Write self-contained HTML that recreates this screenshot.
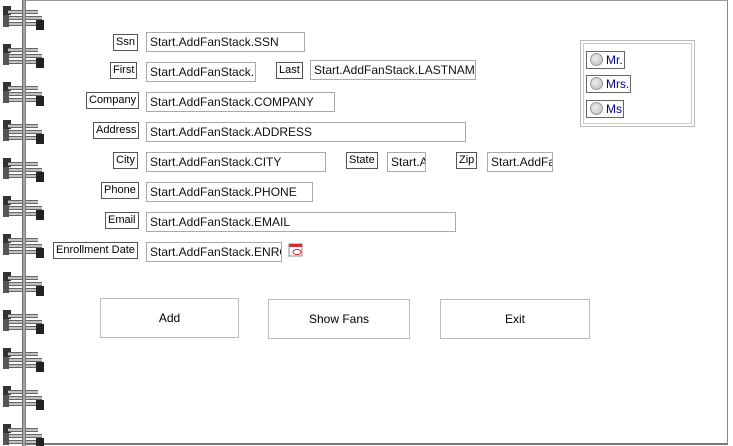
<!DOCTYPE html>
<html><head><style>
body{margin:0;width:733px;height:446px;background:#fff;position:relative;overflow:hidden;font-family:"Liberation Sans",sans-serif;}
.page{position:absolute;left:22px;top:0;width:705px;height:442px;border-top:1px solid #999;border-right:1px solid #888;border-bottom:2px solid #777;}
.bar{position:absolute;left:22px;top:0;width:4px;height:446px;background:linear-gradient(90deg,#555,#bbb,#666);}
.lb{position:absolute;border:1px solid #555;background:#fff;font-size:11px;color:#000;padding:0 2px;height:15px;line-height:15px;}
.in{position:absolute;box-sizing:border-box;border:1px solid #aaa;background:#fff;font-size:12px;height:20px;line-height:18px;padding-left:3px;overflow:hidden;white-space:nowrap;color:#111;}
.btn{position:absolute;box-sizing:border-box;border:1px solid #bbb;background:#fff;font-size:12px;text-align:center;}
.rd{position:absolute;left:586px;border:1px solid #666;height:16px;font-size:12px;line-height:16px;padding-right:1px;color:#00008b;}
.rd i{display:inline-block;width:11px;height:11px;border-radius:50%;border:1px solid #999;background:radial-gradient(circle at 40% 40%,#eee,#bbb);vertical-align:-2px;margin:0 3px 0 3px;}
</style></head><body>
<div class="page"></div>
<svg width="50" height="446" style="position:absolute;left:0;top:0">
<defs><g id="r">
<rect x="3" y="0" width="8" height="9" fill="#333"/>
<path d="M8 6 H38 M8 12 H42 M8 18 H40" stroke="#666" stroke-width="4" fill="none"/>
<path d="M8 6 H38 M8 12 H42 M8 18 H40" stroke="#e0e0e0" stroke-width="1.5" fill="none"/>
<rect x="3" y="9" width="6" height="12" fill="#555"/>
<rect x="36" y="14" width="8" height="10" fill="#222"/>
</g></defs>
<use href="#r" y="6"/><use href="#r" y="44"/><use href="#r" y="82"/><use href="#r" y="120"/><use href="#r" y="158"/><use href="#r" y="196"/><use href="#r" y="234"/><use href="#r" y="272"/><use href="#r" y="310"/><use href="#r" y="348"/><use href="#r" y="386"/><use href="#r" y="424"/>
</svg>
<div class="bar"></div>

<div class="lb" style="left:113px;top:34px">Ssn</div>
<div class="in" style="left:146px;top:32px;width:159px">Start.AddFanStack.SSN</div>
<div class="lb" style="left:110px;top:62px">First</div>
<div class="in" style="left:146px;top:62px;width:110px">Start.AddFanStack.FIRSTNAME</div>
<div class="lb" style="left:276px;top:62px">Last</div>
<div class="in" style="left:310px;top:60px;width:166px">Start.AddFanStack.LASTNAME</div>
<div class="lb" style="left:86px;top:92px">Company</div>
<div class="in" style="left:146px;top:92px;width:189px">Start.AddFanStack.COMPANY</div>
<div class="lb" style="left:93px;top:122px">Address</div>
<div class="in" style="left:146px;top:122px;width:320px">Start.AddFanStack.ADDRESS</div>
<div class="lb" style="left:113px;top:152px">City</div>
<div class="in" style="left:146px;top:152px;width:180px">Start.AddFanStack.CITY</div>
<div class="lb" style="left:346px;top:152px">State</div>
<div class="in" style="left:387px;top:152px;width:39px">Start.AddFanStack.STATE</div>
<div class="lb" style="left:456px;top:152px">Zip</div>
<div class="in" style="left:487px;top:152px;width:66px">Start.AddFanStack.ZIP</div>
<div class="lb" style="left:101px;top:182px">Phone</div>
<div class="in" style="left:146px;top:182px;width:167px">Start.AddFanStack.PHONE</div>
<div class="lb" style="left:105px;top:212px">Email</div>
<div class="in" style="left:146px;top:212px;width:310px">Start.AddFanStack.EMAIL</div>
<div class="lb" style="left:53px;top:242px">Enrollment Date</div>
<div class="in" style="left:146px;top:242px;width:136px">Start.AddFanStack.ENROLLMENTDATE</div>
<svg style="position:absolute;left:288px;top:242px" width="16" height="16"><rect x="1" y="2" width="13" height="12" fill="#fff" stroke="#888"/><rect x="1" y="2" width="13" height="3" fill="#c33"/><ellipse cx="9" cy="10" rx="4" ry="2.5" fill="none" stroke="#d22"/></svg>

<div style="position:absolute;left:580px;top:40px;width:113px;height:85px;border:1px solid #bbb"><div style="position:absolute;left:2px;top:2px;right:2px;bottom:2px;border:1px solid #ccc"></div></div>
<div class="rd" style="top:51px"><i></i>Mr.</div>
<div class="rd" style="top:75px"><i></i>Mrs.</div>
<div class="rd" style="top:100px"><i></i>Ms</div>

<div class="btn" style="left:100px;top:298px;width:139px;height:40px;line-height:38px">Add</div>
<div class="btn" style="left:268px;top:299px;width:142px;height:40px;line-height:38px">Show Fans</div>
<div class="btn" style="left:440px;top:299px;width:150px;height:40px;line-height:38px">Exit</div>
</body></html>
